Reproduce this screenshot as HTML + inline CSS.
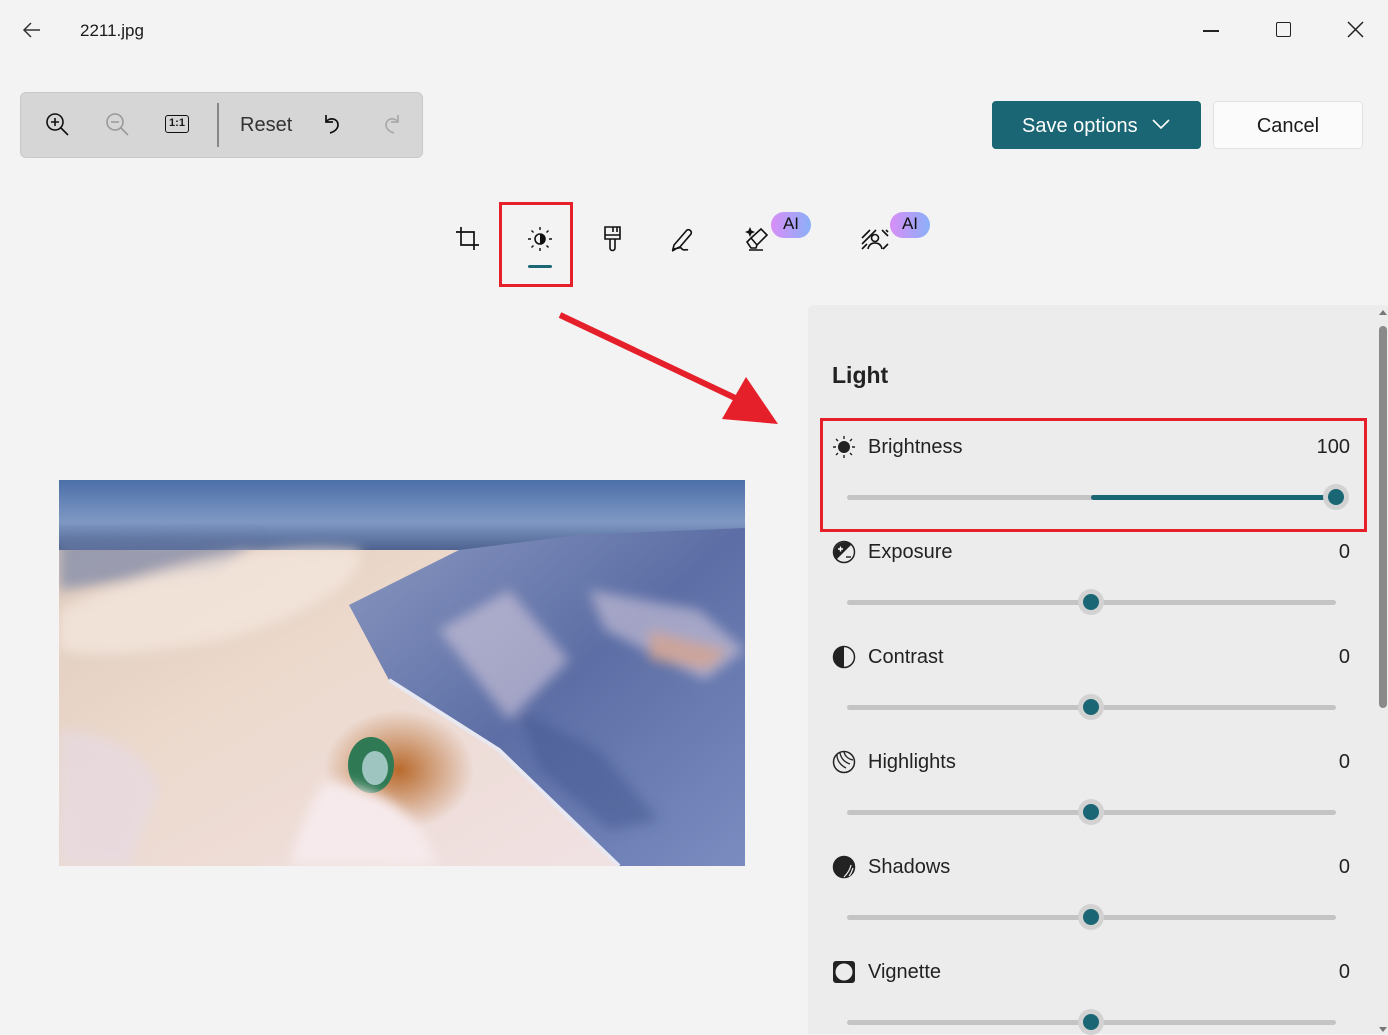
<!DOCTYPE html>
<html><head><meta charset="utf-8"><style>
*{margin:0;padding:0;box-sizing:border-box}
body{width:1388px;height:1034px;background:#f3f3f3;font-family:"Segoe UI","Liberation Sans",sans-serif;position:relative;overflow:hidden;color:#1a1a1a}
.abs{position:absolute}
.lbl{position:absolute;left:868px;font-size:20px;color:#222}
.val{position:absolute;right:38px;font-size:20px;color:#222}
.track{position:absolute;left:847px;width:489px;height:5px;background:#c4c4c4;border-radius:3px}
.thumb{position:absolute;width:26px;height:26px;border-radius:50%;background:#d2d2d2}
.thumb::after{content:"";position:absolute;left:5px;top:5px;width:16px;height:16px;border-radius:50%;background:#1b6674}
.ai{position:absolute;width:40px;height:26px;border-radius:13px;background:linear-gradient(90deg,#d88ef7,#8ab0f7);font-size:17px;text-align:center;line-height:24px;color:#111}
</style></head><body>
<svg class="abs" style="left:22px;top:21px" width="20" height="18" viewBox="0 0 20 18"><path d="M18 9H3M9 2L2 9l7 7" fill="none" stroke="#333" stroke-width="1.5"/></svg>
<div class="abs" style="left:80px;top:21px;font-size:17px">2211.jpg</div>
<div class="abs" style="left:1203px;top:30px;width:16px;height:1.5px;background:#222"></div>
<div class="abs" style="left:1276px;top:22px;width:15px;height:15px;border:1.5px solid #222;border-radius:2px"></div>
<svg class="abs" style="left:1347px;top:21px" width="17" height="17"><path d="M1 1L16 16M16 1L1 16" stroke="#222" stroke-width="1.5"/></svg>
<div class="abs" style="left:20px;top:92px;width:403px;height:66px;background:#d6d6d6;border:1px solid #c8c8c8;border-radius:6px"></div>
<svg class="abs" style="left:44px;top:111px" width="28" height="28"><circle cx="11" cy="11" r="8" fill="none" stroke="#111" stroke-width="1.6"/><path d="M17 17l7 7M11 7v8M7 11h8" stroke="#111" stroke-width="1.6"/></svg>
<svg class="abs" style="left:104px;top:111px" width="28" height="28"><circle cx="11" cy="11" r="8" fill="none" stroke="#999" stroke-width="1.6"/><path d="M17 17l7 7M7 11h8" stroke="#999" stroke-width="1.6"/></svg>
<div class="abs" style="left:165px;top:115px;width:24px;height:18px;border:1.6px solid #111;border-radius:3px;font-size:11px;line-height:14px;text-align:center;font-weight:bold">1:1</div>
<div class="abs" style="left:217px;top:103px;width:2px;height:44px;background:#888"></div>
<div class="abs" style="left:240px;top:114px;font-size:20px;color:#333">Reset</div>
<svg class="abs" style="left:320px;top:112px" width="24" height="24"><path d="M6 3v7h7M6 10c3-5 12-4 12 3 0 4-4 7-8 8" fill="none" stroke="#111" stroke-width="1.7"/></svg>
<svg class="abs" style="left:380px;top:112px" width="24" height="24"><path d="M18 3v7h-7M18 10c-3-5-12-4-12 3 0 4 4 7 8 8" fill="none" stroke="#aaa" stroke-width="1.7"/></svg>
<div class="abs" style="left:992px;top:101px;width:209px;height:48px;background:#1b6674;border-radius:4px;color:#fff;font-size:20px;line-height:50px;padding-left:30px">Save options</div>
<svg class="abs" style="left:1152px;top:118px" width="18" height="12"><path d="M1 2l8 8 8-8" fill="none" stroke="#fff" stroke-width="1.6"/></svg>
<div class="abs" style="left:1213px;top:101px;width:150px;height:48px;background:#fbfbfb;border:1px solid #e2e2e2;border-radius:4px;font-size:20px;line-height:48px;text-align:center">Cancel</div>
<svg class="abs" style="left:455px;top:226px" width="26" height="26"><path d="M6 1v18h18M1 6h18v18" fill="none" stroke="#111" stroke-width="1.7"/></svg>
<svg class="abs" style="left:527px;top:226px" width="26" height="26"><circle cx="13" cy="13" r="5" fill="none" stroke="#111" stroke-width="1.6"/><path d="M13 8a5 5 0 0 1 0 10z" fill="#111"/><path d="M13 1v3M13 22v3M1 13h3M22 13h3M4.5 4.5l2 2M19.5 19.5l2 2M4.5 21.5l2-2M19.5 6.5l2-2" stroke="#111" stroke-width="1.4"/></svg>
<div class="abs" style="left:528px;top:265px;width:24px;height:3px;background:#1b6674;border-radius:2px"></div>
<div class="abs" style="left:499px;top:202px;width:74px;height:85px;border:3px solid #e5202a"></div>
<svg class="abs" style="left:602px;top:226px" width="22" height="26"><path d="M3 1h15v12H3zM3 9h15M8 13v9a2 2 0 0 0 5 0v-9M11 1v5M15 1v5" fill="none" stroke="#111" stroke-width="1.6"/></svg>
<svg class="abs" style="left:670px;top:226px" width="28" height="26"><path d="M4 19L17 4a3 3 0 0 1 4 4L9 22l-6 1zM2 25c5-2 7-6 10-2 2 2 4 0 6 1" fill="none" stroke="#111" stroke-width="1.6"/></svg>
<svg class="abs" style="left:743px;top:226px" width="28" height="26"><path d="M8 12l10-9 6 6-10 10zM8 12l-4 4 4 6h5l1-3M6 24h14" fill="none" stroke="#111" stroke-width="1.6"/><path d="M7 1l1.5 3.5L12 6 8.5 7.5 7 11 5.5 7.5 2 6l3.5-1.5z" fill="#111"/></svg>
<div class="ai" style="left:771px;top:212px">AI</div>
<svg class="abs" style="left:861px;top:228px" width="28" height="22"><path d="M1 10L9 2M1 16L15 2M1 21L6 16M22 21l5-5M21 2l6 6M25 2l2 2" stroke="#111" stroke-width="1.6"/><circle cx="14" cy="10" r="3.5" fill="none" stroke="#111" stroke-width="1.6"/><path d="M7 21c1-5 4-6 7-6s6 1 7 6" fill="none" stroke="#111" stroke-width="1.6"/></svg>
<div class="ai" style="left:890px;top:212px">AI</div>
<svg class="abs" style="left:550px;top:305px" width="240" height="130"><path d="M10 10L200 100" stroke="#e5202a" stroke-width="6"/><path d="M228 119L172 114 196 72z" fill="#e5202a"/></svg>
<svg class="abs" style="left:59px;top:480px" width="686" height="386" viewBox="0 0 686 386">
<defs>
<linearGradient id="sky" x1="0" y1="0" x2="0" y2="1"><stop offset="0" stop-color="#4b6fa8"/><stop offset=".6" stop-color="#7f98c4"/><stop offset="1" stop-color="#4d628f"/></linearGradient>
<linearGradient id="fog" x1="0" y1="0" x2="1" y2="1"><stop offset="0" stop-color="#d9c6b8"/><stop offset=".4" stop-color="#ecd9cc"/><stop offset="1" stop-color="#f1e3e8"/></linearGradient>
<linearGradient id="mt" x1="0" y1="0" x2="1" y2="1"><stop offset="0" stop-color="#8a97c0"/><stop offset=".5" stop-color="#5c6ea5"/><stop offset="1" stop-color="#7a8cc0"/></linearGradient>
<radialGradient id="rust" cx=".5" cy=".5" r=".5"><stop offset="0" stop-color="#b86a2c"/><stop offset="1" stop-color="#b86a2c" stop-opacity="0"/></radialGradient>
<filter id="bl"><feGaussianBlur stdDeviation="6"/></filter>
</defs>
<rect width="686" height="386" fill="url(#fog)"/>
<rect width="686" height="70" fill="url(#sky)"/>
<g filter="url(#bl)">
<path d="M0 60L200 58 160 90 0 110z" fill="#6a7aa3" opacity=".6"/>
<path d="M0 130c80-40 200-70 300-60 10 30-60 70-140 90-60 10-120 20-160 10z" fill="#f4e6dc" opacity=".8"/>
<path d="M0 250c40 0 90 20 100 60L70 386H0z" fill="#e6d8e2" opacity=".7"/>
</g>
<path d="M290 125L400 70 520 55 686 48 686 386 560 386 440 270 330 200z" fill="url(#mt)"/>
<g filter="url(#bl)">
<path d="M380 150l70-40 60 70-60 60zM530 110l110 20 46 40-40 30-100-50z" fill="#dcd0e0" opacity=".55"/>
<path d="M590 150l80 20-20 20-60-10z" fill="#e6a57e" opacity=".6"/>
<path d="M460 230l80 40 60 70-50 10-70-60z" fill="#3f5590" opacity=".5"/>
</g>
<path d="M330 200L440 270 560 386" fill="none" stroke="#e8e8f2" stroke-width="4"/>
<ellipse cx="340" cy="290" rx="75" ry="60" fill="url(#rust)"/>
<ellipse cx="312" cy="285" rx="23" ry="28" fill="#2f7a55"/>
<ellipse cx="316" cy="288" rx="13" ry="17" fill="#9ec5c0"/>
<path d="M270 300c30 10 80 10 110 86H230c10-30 20-70 40-86z" fill="#f6eaec" filter="url(#bl)"/>
</svg>
<div class="abs" style="left:808px;top:305px;width:570px;height:729px;background:#ececec;border-radius:6px 0 0 0"></div>
<div class="abs" style="left:1377px;top:305px;width:11px;height:729px;background:#ececec"></div>
<div class="abs" style="left:1379px;top:326px;width:8px;height:382px;background:#8a8a8a;border-radius:4px"></div>
<svg class="abs" style="left:1378px;top:308px" width="10" height="8"><path d="M1 7L5 2 9 7z" fill="#777"/></svg>
<svg class="abs" style="left:1378px;top:1026px" width="10" height="8"><path d="M1 1L5 6 9 1z" fill="#777"/></svg>
<div class="abs" style="left:832px;top:362px;font-size:23px;font-weight:600;color:#222">Light</div>
<div class="abs" style="left:820px;top:418px;width:547px;height:114px;border:3px solid #e5202a"></div>
<svg class="abs" style="left:832px;top:435px" width="24" height="24"><circle cx="12" cy="12" r="6" fill="#222"/><path d="M12 1v3M12 20v3M1 12h3M20 12h3M4 4l2 2M18 18l2 2M4 20l2-2M18 6l2-2" stroke="#222" stroke-width="1.4"/></svg>
<div class="lbl" style="top:436px">Brightness</div><div class="val" style="top:436px">100</div>
<div class="track" style="top:495px"></div>
<div class="abs" style="left:1091px;top:495px;width:240px;height:5px;background:#1b6674;border-radius:3px"></div>
<div class="thumb" style="left:1323px;top:484px"></div>
<svg class="abs" style="left:832px;top:540px" width="24" height="24"><circle cx="12" cy="12" r="10.5" fill="none" stroke="#222" stroke-width="1.5"/><path d="M4.6 19.4A10.5 10.5 0 0 1 19.4 4.6z" fill="#222"/><path d="M6 9h5M8.5 6.5v5" stroke="#fff" stroke-width="1.4"/><path d="M14 17h5" stroke="#222" stroke-width="1.4"/></svg>
<div class="lbl" style="top:541px">Exposure</div><div class="val" style="top:541px">0</div>
<div class="track" style="top:600px"></div><div class="thumb" style="left:1078px;top:589px"></div>
<svg class="abs" style="left:832px;top:645px" width="24" height="24"><circle cx="12" cy="12" r="10.5" fill="none" stroke="#222" stroke-width="1.5"/><path d="M12 1.5a10.5 10.5 0 0 0 0 21z" fill="#222"/></svg>
<div class="lbl" style="top:646px">Contrast</div><div class="val" style="top:646px">0</div>
<div class="track" style="top:705px"></div><div class="thumb" style="left:1078px;top:694px"></div>
<svg class="abs" style="left:832px;top:750px" width="24" height="24"><circle cx="12" cy="12" r="10.5" fill="none" stroke="#222" stroke-width="1.5"/><path d="M5 5c0 5 3 10 9 13M8 3c1 5 4 9 10 11M12 2c1 4 4 7 9 8" fill="none" stroke="#222" stroke-width="1.3"/></svg>
<div class="lbl" style="top:751px">Highlights</div><div class="val" style="top:751px">0</div>
<div class="track" style="top:810px"></div><div class="thumb" style="left:1078px;top:799px"></div>
<svg class="abs" style="left:832px;top:855px" width="24" height="24"><circle cx="12" cy="12" r="10.5" fill="#222" stroke="#222" stroke-width="1.5"/><path d="M12 22c3-3 6-7 7-12M17 21c2-2 3-5 4-8" fill="none" stroke="#eee" stroke-width="1.2"/></svg>
<div class="lbl" style="top:856px">Shadows</div><div class="val" style="top:856px">0</div>
<div class="track" style="top:915px"></div><div class="thumb" style="left:1078px;top:904px"></div>
<svg class="abs" style="left:832px;top:960px" width="24" height="24"><rect x="1" y="1" width="22" height="22" rx="3" fill="#222"/><ellipse cx="12" cy="12" rx="8.5" ry="8.5" fill="#ececec"/></svg>
<div class="lbl" style="top:961px">Vignette</div><div class="val" style="top:961px">0</div>
<div class="track" style="top:1020px"></div><div class="thumb" style="left:1078px;top:1009px"></div>
</body></html>
